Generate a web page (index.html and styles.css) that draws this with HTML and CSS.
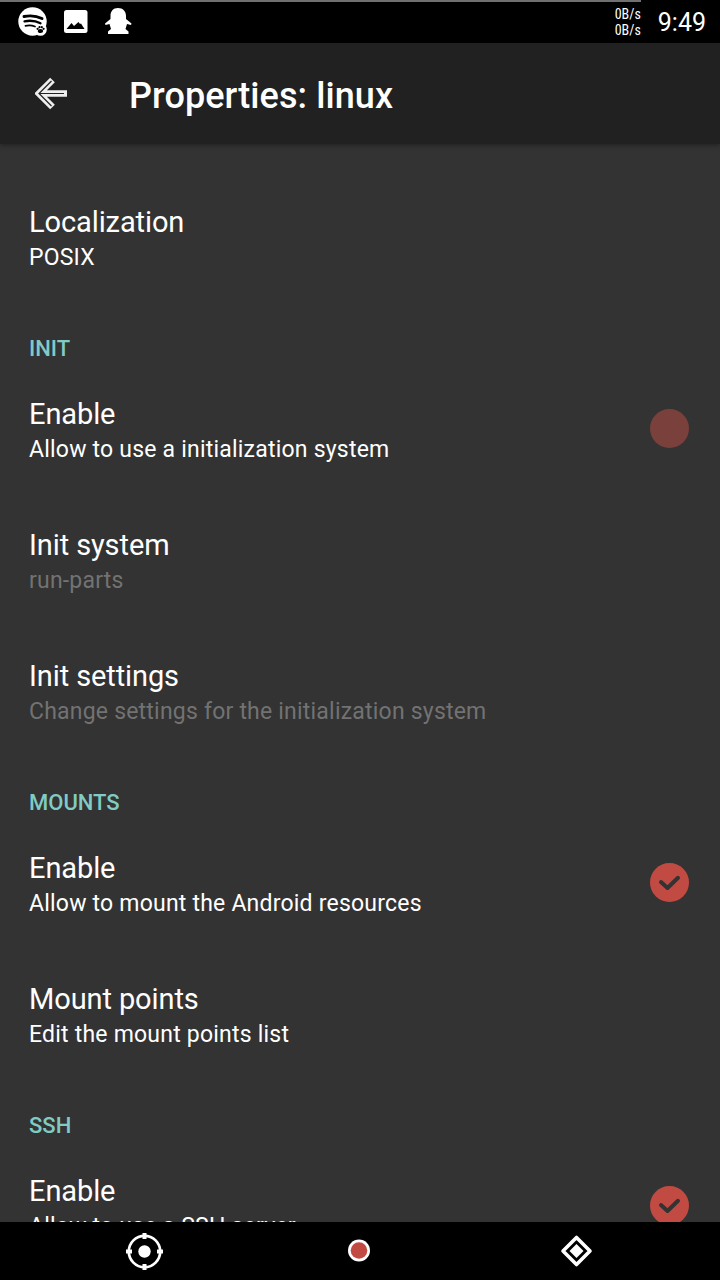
FILE: index.html
```html
<!DOCTYPE html>
<html lang="en">
<head>
<meta charset="utf-8">
<title>Properties: linux</title>
<link rel="stylesheet" href="styles.css">
</head>
<body>
<div class="screen">
  <header class="status">
    <div class="battery"></div>
    <svg class="notifications" width="150" height="43" viewBox="0 0 150 43">
      <circle cx="32.500" cy="21.500" r="14.200" fill="#fff"/>
      <circle cx="40.500" cy="29.500" r="6.300" fill="#fff"/>
      <g fill="none" stroke="#000" stroke-linecap="round">
        <path d="M24 16.500q10-2 18 2" stroke-width="2.900"/>
        <path d="M24.500 21.300q9-1.700 16 2" stroke-width="2.300"/>
        <path d="M25.500 25.800q5-1 9.500.7" stroke-width="1.800"/>
      </g>
      <g fill="#000">
        <ellipse cx="40.500" cy="31" rx="2.700" ry="2.100"/>
        <circle cx="37.600" cy="28.800" r="1.100"/>
        <circle cx="39.500" cy="27.200" r="1.100"/>
        <circle cx="41.800" cy="27.200" r="1.100"/>
        <circle cx="43.600" cy="28.800" r="1.100"/>
      </g>
      <rect x="64" y="10" width="23.500" height="23" rx="2.500" fill="#fff"/>
      <path d="M66.500 29l5-6 2.500 3 4.500-4 1.500 2 1-.5 3.500 5.500z" fill="#000"/>
      <path d="M118 8c-5 0-7.500 3.500-7.500 8v3l-5.500 4.500.5 1.500 4-1 1.500 5-3 2.500V34h20.500v-2.500l-3-2.500 1.500-5 4 1 .5-1.500-5.500-4.500v-3c0-4.500-3-8-8-8z" fill="#fff"/>
    </svg>
    <div class="speed"><span>0B/s</span><span>0B/s</span></div>
    <time class="clock">9:49</time>
  </header>
  <div class="toolbar">
    <svg class="back" width="34" height="34" viewBox="0 0 34 34">
      <path d="M32 17.500H5M17.500 4L4 17.500 17.500 31" fill="none" stroke="#eee" stroke-width="6.600"/>
      <path d="M29 17.500H4M16.500 5L4 17.500 16.500 30" fill="none" stroke="#222" stroke-width="1.200"/>
    </svg>
    <h1 class="title">Properties: linux</h1>
  </div>
  <main class="list">
    <div class="item"><div class="label"><div class="name">Localization</div><div class="summary">POSIX</div></div></div>
    <h2 class="category">INIT</h2>
    <div class="item"><div class="label"><div class="name">Enable</div><div class="summary">Allow to use a initialization system</div></div><span class="check off"></span></div>
    <div class="item"><div class="label"><div class="name">Init system</div><div class="summary dim">run-parts</div></div></div>
    <div class="item"><div class="label"><div class="name">Init settings</div><div class="summary dim">Change settings for the initialization system</div></div></div>
    <h2 class="category">MOUNTS</h2>
    <div class="item"><div class="label"><div class="name">Enable</div><div class="summary">Allow to mount the Android resources</div></div><span class="check"><svg width="39" height="39" viewBox="0 0 39 39"><path class="tick" d="M11 19l6.500 6L28 14.800"/></svg></span></div>
    <div class="item"><div class="label"><div class="name">Mount points</div><div class="summary">Edit the mount points list</div></div></div>
    <h2 class="category">SSH</h2>
    <div class="item"><div class="label"><div class="name">Enable</div><div class="summary">Allow to use a SSH server</div></div><span class="check"><svg width="39" height="39" viewBox="0 0 39 39"><path class="tick" d="M11 19l6.500 6L28 14.800"/></svg></span></div>
  </main>
  <nav class="navbar">
    <svg width="720" height="58" viewBox="0 0 720 58">
      <g fill="none" stroke="#fff">
        <circle cx="144.500" cy="29.500" r="15.700" stroke-width="2.700"/>
        <path d="M144.500 11v6M144.500 42v6M126 29.500h6M157 29.500h6" stroke-width="4"/>
      </g>
      <circle cx="144.500" cy="29.500" r="6.200" fill="#fff"/>
      <circle cx="359" cy="28.500" r="11" fill="#fff"/>
      <circle cx="359" cy="28.500" r="8.300" fill="#c14b43"/>
      <path d="M576.500 15.500l13.500 13.500-13.500 13.500L563 29z" fill="none" stroke="#fff" stroke-width="3.600" stroke-linejoin="round"/>
      <path d="M576.500 22l7 7-7 7-7-7z" fill="#fff"/>
    </svg>
  </nav>
</div>
</body>
</html>
```
FILE: styles.css
```css
body {
  margin: 0;
  background: #333;
  color: #fff;
  font-family: Roboto, "Noto Sans", sans-serif;
}

svg {
  display: block;
}

.screen {
  display: flex;
  flex-direction: column;
  width: 720px;
  height: 1280px;
  overflow: hidden;
}

.status {
  position: relative;
  display: flex;
  align-items: center;
  flex: 0 0 43px;
  background: #000;
}

.battery {
  position: absolute;
  top: 0;
  left: 0;
  width: 641px;
  height: 2px;
  background: #707070;
}

.speed {
  display: flex;
  flex-direction: column;
  margin-left: auto;
  padding-top: 1px;
  font-family: "Roboto Condensed", Roboto, sans-serif;
  font-size: 14px;
  line-height: 16px;
}

.clock {
  margin: 2px 14px 0 17px;
  font-size: 25px;
  line-height: 30px;
}

.toolbar {
  position: relative;
  display: flex;
  align-items: center;
  flex: 0 0 101px;
  background: #212121;
  box-shadow: 0 1px 5px rgba(0, 0, 0, 0.4);
}

.back {
  margin: 0 0 2px 35px;
}

.title {
  margin: 4px 0 0 60px;
  font-size: 36px;
  font-weight: 500;
  line-height: 42px;
  letter-spacing: 0.08px;
}

.list {
  flex: 1;
  min-height: 0;
  padding: 31px 31px 0 29px;
  overflow: hidden;
}

.item {
  display: flex;
  align-items: center;
  justify-content: space-between;
  height: 131px;
}

.label {
  margin-bottom: 5px;
}

.name {
  font-size: 29px;
  line-height: 34px;
  letter-spacing: -0.1px;
}

.summary {
  padding-top: 5px;
  font-size: 23px;
  line-height: 27px;
  letter-spacing: 0.21px;
}

.dim {
  color: #727272;
}

.category {
  height: 37px;
  margin: 0;
  padding-top: 24px;
  color: #80cbc4;
  font-size: 22px;
  font-weight: 500;
  line-height: 37px;
}

.check {
  width: 39px;
  height: 39px;
  margin-bottom: 8px;
  border-radius: 50%;
  background: #c14b43;
}

.off {
  background: #7a403c;
}

.tick {
  fill: none;
  stroke: #333;
  stroke-width: 4;
  stroke-linecap: round;
  stroke-linejoin: round;
}

.navbar {
  flex: 0 0 58px;
  background: #000;
}
```
